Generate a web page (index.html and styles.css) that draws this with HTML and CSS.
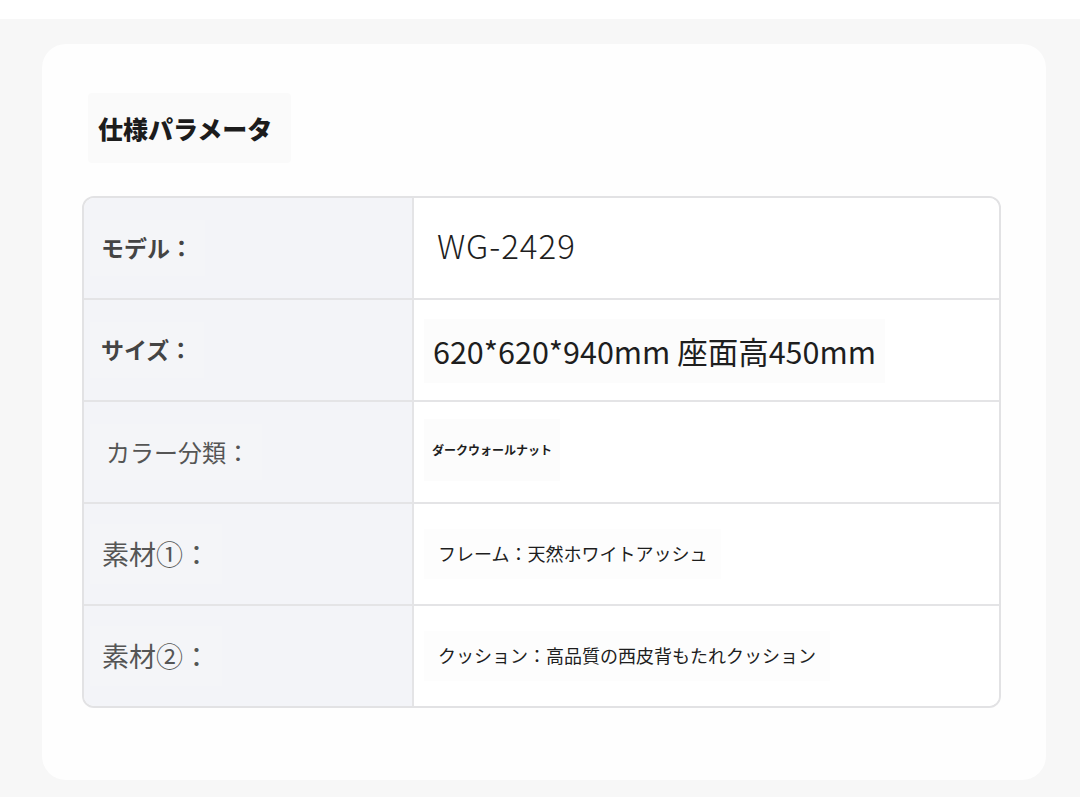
FILE: index.html
```html
<!DOCTYPE html>
<html lang="ja">
<head>
<meta charset="utf-8">
<link rel="stylesheet" href="styles.css">
</head>
<body>
<div class="page">
  <div class="card">
    <div class="title-box"><h2 class="title">仕様パラメータ</h2></div>
    <div class="spec">
      <div class="row">
        <div class="key"><span class="kbox bold">モデル：</span></div>
        <div class="val"><span class="vbox model">WG-2429</span></div>
      </div>
      <div class="row">
        <div class="key"><span class="kbox bold">サイズ：</span></div>
        <div class="val"><span class="vbox size">620*620*940mm 座面高450mm</span></div>
      </div>
      <div class="row">
        <div class="key"><span class="kbox color">カラー分類：</span></div>
        <div class="val"><span class="vbox small">ダークウォールナット</span></div>
      </div>
      <div class="row">
        <div class="key"><span class="kbox mat">素材①：</span></div>
        <div class="val"><span class="vbox mid">フレーム：天然ホワイトアッシュ</span></div>
      </div>
      <div class="row last">
        <div class="key"><span class="kbox mat">素材②：</span></div>
        <div class="val"><span class="vbox mid">クッション：高品質の西皮背もたれクッション</span></div>
      </div>
    </div>
  </div>
</div>
</body>
</html>
```

FILE: styles.css
```css
html, body {
  margin: 0;
  padding: 0;
  background: #ffffff;
  font-family: "Noto Sans CJK JP", "Noto Sans", sans-serif;
}

.page {
  margin-top: 19px;
  background: #f7f7f7;
  padding: 25px 34px 17px 42px;
  height: 778px;
  box-sizing: border-box;
}

.card {
  background: #fefefe;
  border-radius: 24px;
  height: 736px;
  box-sizing: border-box;
  padding: 49px 45px 0 40px;
}

.title-box {
  display: inline-flex;
  align-items: center;
  margin-left: 6px;
  width: 203px;
  height: 70px;
  box-sizing: border-box;
  padding-left: 10px;
  background: #fafafa;
  border-radius: 4px;
}

.title {
  margin: 0;
  font-size: 25px;
  font-weight: 900;
  color: #1c1c1c;
  line-height: 1;
}

.spec {
  margin-top: 33px;
  border: 2px solid #e2e2e4;
  border-radius: 12px;
  overflow: hidden;
}

.row {
  display: grid;
  grid-template-columns: 330px 1fr;
  height: 100px;
  border-bottom: 2px solid #e4e4e6;
}

.row.last {
  border-bottom: none;
}

.key {
  background: #f3f4f8;
  border-right: 2px solid #e4e4e6;
  display: flex;
  align-items: center;
  padding-left: 6px;
}

.kbox {
  display: inline-block;
  padding: 14px 12px 14px 11px;
  background: #f4f5f8;
  line-height: 1.2;
}

.kbox.bold {
  font-size: 23px;
  font-weight: 700;
  color: #444444;
}

.kbox.color {
  font-size: 24px;
  color: #555555;
  padding-left: 16px;
}

.kbox.mat {
  font-size: 27px;
  color: #555555;
  padding-left: 12px;
}

.val {
  display: flex;
  align-items: center;
  padding-left: 10px;
  background: #ffffff;
}

.vbox {
  display: inline-block;
  line-height: 1.2;
  color: #1e1e1e;
}

.vbox.model {
  font-size: 33px;
  font-weight: 300;
  letter-spacing: 1px;
  padding: 10px 13px;
  margin-top: -4px;
}

.vbox.size {
  font-size: 30.5px;
  padding: 14px 9px;
  background: #fcfcfc;
  margin-top: 2px;
}

.vbox.small {
  font-size: 12px;
  font-weight: 700;
  padding: 24px 8px;
  background: #fcfcfc;
  margin-top: -4px;
}

.vbox.mid {
  font-size: 18px;
  padding: 14px 14px;
  background: #fdfdfd;
}
```
